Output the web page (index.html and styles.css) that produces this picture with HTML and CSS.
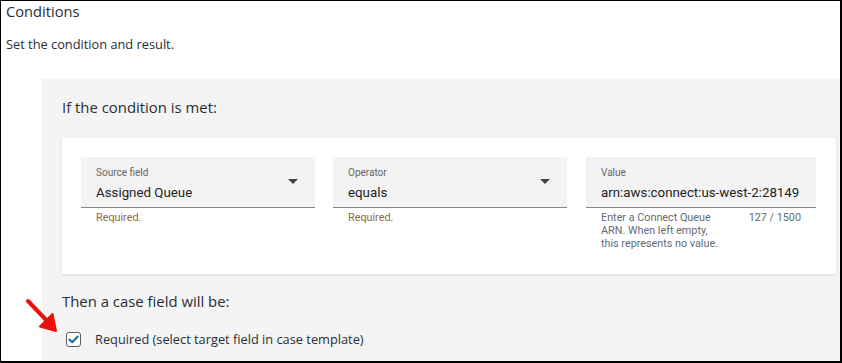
FILE: index.html
```html
<!DOCTYPE html>
<html>
<head>
<meta charset="utf-8">
<link rel="stylesheet" href="styles.css">
</head>
<body>
<div class="frame">
  <h1 class="title">Conditions</h1>
  <p class="desc">Set the condition and result.</p>
  <div class="panel">
    <h2 class="sub">If the condition is met:</h2>
    <div class="card">
      <div class="field">
        <div class="box">
          <div class="label">Source field</div>
          <div class="value">Assigned Queue</div>
          <span class="caret"></span>
        </div>
        <div class="help warn">Required.</div>
      </div>
      <div class="field">
        <div class="box">
          <div class="label">Operator</div>
          <div class="value">equals</div>
          <span class="caret"></span>
        </div>
        <div class="help warn">Required.</div>
      </div>
      <div class="field">
        <div class="box">
          <div class="label">Value</div>
          <div class="value clip">arn:aws:connect:us-west-2:28149</div>
        </div>
        <div class="help row">
          <span class="help-text">Enter a Connect Queue ARN. When left empty, this represents no value.</span>
          <span class="count">127 / 1500</span>
        </div>
      </div>
    </div>
    <h2 class="sub then">Then a case field will be:</h2>
    <label class="check">
      <span class="checkbox">
        <svg width="11" height="9" viewBox="0 0 11 9"><path d="M1.3 4.6 L4.2 7.3 L9.7 1.5" fill="none" stroke="#0d6d9b" stroke-width="2" stroke-linecap="round" stroke-linejoin="round"/></svg>
      </span>
      <span class="check-label">Required (select target field in case template)</span>
    </label>
  </div>
  <svg class="arrow" width="40" height="40" viewBox="0 0 40 40">
    <path d="M3 3 L25 26" stroke="#e8120c" stroke-width="4" stroke-linecap="round"/>
    <path d="M31 33 L15 28.5 L27.5 16 Z" fill="#e8120c" stroke="#e8120c" stroke-width="2" stroke-linejoin="round"/>
  </svg>
</div>
</body>
</html>
```
FILE: styles.css
```css
* { box-sizing: border-box; }
html, body { margin: 0; padding: 0; background: #fff; }
.frame {
  position: relative;
  width: 842px;
  height: 363px;
  border-style: solid;
  border-color: #000;
  border-width: 1px 2px 2px 1px;
  overflow: hidden;
  font-family: "Open Sans", sans-serif;
  color: #16191f;
  display: flex;
  flex-direction: column;
}
.title {
  margin: 0;
  padding: 0 0 0 5px;
  font-size: 14.7px;
  font-weight: 400;
  line-height: 20px;
  color: #2a2e33;
}
.desc {
  margin: 14px 0 0 5px;
  font-size: 12.8px;
  line-height: 18px;
  color: #2a2e33;
}
.panel {
  margin: 26px 0 0 41px;
  flex: 1;
  background: #f4f4f4;
  padding: 15px 4px 0 20px;
}
.sub {
  margin: 0;
  font-size: 14.9px;
  font-weight: 400;
  line-height: 26px;
  color: #2a2e33;
}
.card {
  margin-top: 18px;
  height: 136px;
  background: #fff;
  box-shadow: 0 1px 3px rgba(0,0,0,0.13);
  padding: 19px 18px 0 19px;
  display: grid;
  grid-template-columns: 234px 234px 231px;
  column-gap: 18px;
}
.field:nth-child(3) { margin-left: 1px; }
.box {
  position: relative;
  height: 51px;
  background: #f3f3f3;
  border-bottom: 1px solid #8a8a8a;
  padding: 9px 15px 0 15px;
  font-family: Roboto, sans-serif;
}
.label {
  font-size: 10px;
  line-height: 13px;
  color: #666;
}
.value {
  margin-top: 5px;
  font-size: 13.3px;
  line-height: 18px;
  color: #222;
  white-space: nowrap;
  overflow: hidden;
}
.caret {
  position: absolute;
  right: 17px;
  top: 22px;
  width: 0;
  height: 0;
  border-left: 5.5px solid transparent;
  border-right: 5.5px solid transparent;
  border-top: 5.5px solid #444;
}
.help {
  font-family: Roboto, sans-serif;
  font-size: 10.8px;
  line-height: 13px;
  padding: 3px 15px 0 15px;
  color: #646b73;
}
.warn { color: #8b6a3f; }
.row { display: flex; justify-content: space-between; }
.help-text { width: 118px; }
.count { white-space: nowrap; }
.then { margin-top: 14px; }
.check {
  display: flex;
  align-items: center;
  margin-top: 16px;
  margin-left: 4px;
}
.checkbox {
  width: 15px;
  height: 15px;
  border: 1px solid #545b64;
  border-radius: 3px;
  background: #fff;
  display: flex;
  align-items: center;
  justify-content: center;
}
.check-label {
  margin-left: 14px;
  font-size: 12.8px;
  color: #2a2e33;
}
.arrow {
  position: absolute;
  left: 24px;
  top: 297px;
}
```
